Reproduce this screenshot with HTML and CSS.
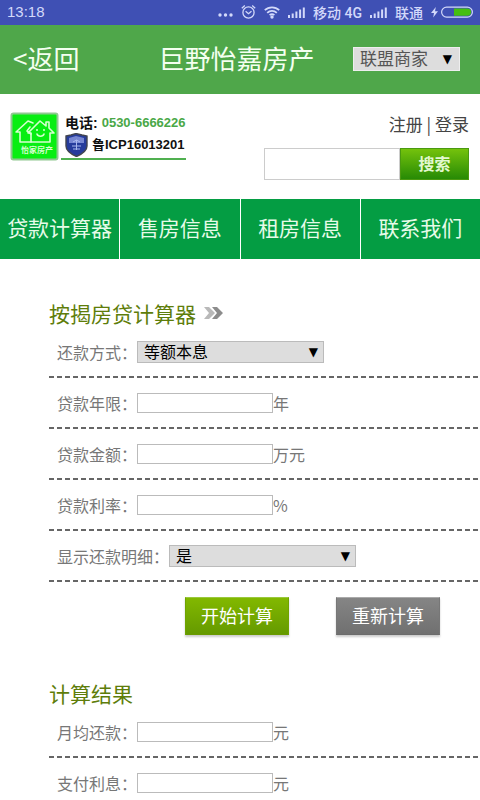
FILE: index.html
```html
<!DOCTYPE html>
<html lang="zh-CN">
<head>
    <meta charset="utf-8">
    <title>按揭房贷计算器</title>
    <meta name="viewport" content="width=device-width, initial-scale=1.0">
    <link rel="stylesheet" href="styles.css">
</head>
<body>
    <div class="status">
        <span class="time">13:18</span>
        <svg width="15" height="16" viewBox="0 0 15 16" fill="currentColor">
            <circle cx="2" cy="11" r="1.7"/><circle cx="7.5" cy="11" r="1.7"/><circle cx="13" cy="11" r="1.7"/>
        </svg>
        <svg width="15" height="16" viewBox="0 0 15 16" fill="none" stroke="currentColor" stroke-width="1.3">
            <circle cx="7.5" cy="8.5" r="5.6"/>
            <path d="M4.6 7.2l2.9 2.5 3-2.5M.8 4.2L3.8 1.6M14.2 4.2l-3-2.6"/>
        </svg>
        <svg width="16" height="16" viewBox="0 0 16 16" fill="none" stroke="currentColor" stroke-width="1.8">
            <path d="M.8 6.2a10.4 10.4 0 0 1 14.4 0M3.2 8.8a7 7 0 0 1 9.6 0M5.6 11.2a3.6 3.6 0 0 1 4.8 0"/>
            <circle cx="8" cy="13" r=".8"/>
        </svg>
        <svg width="17" height="16" viewBox="0 0 17 16" fill="currentColor">
            <path d="M0 11h2v3H0zM3.7 9.5h2V14h-2zM7.4 7.5h2V14h-2zM11.1 5.5h2V14h-2zM14.8 3.5h2V14h-2z"/>
        </svg>
        <span>移动 4G</span>
        <svg width="17" height="16" viewBox="0 0 17 16" fill="currentColor">
            <path d="M0 11h2v3H0zM3.7 9.5h2V14h-2zM7.4 7.5h2V14h-2zM11.1 5.5h2V14h-2zM14.8 3.5h2V14h-2z"/>
        </svg>
        <span>联通</span>
        <svg width="42" height="16" viewBox="0 0 42 16">
            <path d="M4.8 3L0 9h3l-.8 4.5L7 7.2H4z" fill="currentColor"/>
            <rect x="10.6" y="3.1" width="30.8" height="10" rx="5" fill="none" stroke="currentColor" stroke-width="1.2"/>
            <path d="M23 4.4h13.4a3.7 3.7 0 0 1 0 7.4H23z" fill="#45bf10"/>
        </svg>
    </div>

    <header class="header">
        <a class="back" href="#">&lt;返回</a>
        <h1>巨野怡嘉房产</h1>
        <span class="select shop">
            <select aria-label="联盟商家">
                <option>联盟商家</option>
            </select>
        </span>
    </header>

    <div class="top">
        <a class="logo" href="#">
            <svg width="49" height="49" viewBox="0 0 49 49">
                <rect x="1.500" y="1.500" width="46" height="46" rx="2" fill="#08ee12" stroke="#8fc890" stroke-width="2"/>
                <g fill="none" stroke="#d6ffd0" stroke-width="1.6" stroke-linejoin="round" stroke-linecap="round">
                    <path d="M21 30H10V20H6L18 9l5 2"/>
                    <path d="M20 15l-3 4 4 3"/>
                    <path d="M24 30h-3v-9h-3L30 9l6 5v-4h3v6l5 5h-4v9H24"/>
                    <path d="M27 22c1 3 6 3 7 0"/>
                </g>
                <circle cx="27" cy="18" r="1" fill="#d6ffd0"/><circle cx="34" cy="18" r="1" fill="#d6ffd0"/>
                <text x="27" y="41" text-anchor="middle" class="logo-name">怡家房产</text>
            </svg>
            <span class="logo-info">
                <span class="logo-row">电话: <b class="tel">0530-6666226</b></span>
                <span class="logo-row icp">
                    <svg width="23" height="24" viewBox="0 0 23 24">
                        <path d="M1 3l5-1 5-1.500L17 2l5 1v10c0 5-6 8.500-10.500 10.500C7 21.500 1 18 1 13z" fill="#263c9c" stroke="#42454f" stroke-width="1.400"/>
                        <path d="M4 5l7-2 8 2v5H4z" fill="#7787d2"/>
                        <path d="M7 13h9M8 16h7M11.500 7v10M8 9l3.500-2L15 9" fill="none" stroke="#a9b8ee"/>
                    </svg>
                    鲁ICP16013201
                </span>
            </span>
        </a>
        <div class="user">
            <div class="links"><a href="#">注册</a> | <a href="#">登录</a></div>
            <form class="search">
                <input type="text" aria-label="搜索">
                <button type="button">搜索</button>
            </form>
        </div>
    </div>

    <nav class="nav">
        <a href="#">贷款计算器</a>
        <a href="#">售房信息</a>
        <a href="#">租房信息</a>
        <a href="#">联系我们</a>
    </nav>

    <form class="calc">
        <h2>按揭房贷计算器
            <svg width="20" height="14" viewBox="0 0 20 14">
                <path d="M0 1h5l6 6-6 6H0l5-6z" fill="#b9b9b9"/>
                <path d="M8 1h5l6 6-6 6H8l5-6z" fill="#8c8c8c"/>
            </svg>
        </h2>
        <div class="row">
            <label for="way">还款方式：</label>
            <span class="select">
                <select id="way">
                    <option>等额本息</option>
                    <option>等额本金</option>
                </select>
            </span>
        </div>
        <div class="row">
            <label for="years">贷款年限：</label><input type="text" id="years">年
        </div>
        <div class="row">
            <label for="amount">贷款金额：</label><input type="text" id="amount">万元
        </div>
        <div class="row">
            <label for="rate">贷款利率：</label><input type="text" id="rate">%
        </div>
        <div class="row">
            <label for="detail">显示还款明细：</label>
            <span class="select">
                <select id="detail">
                    <option>是</option>
                    <option>否</option>
                </select>
            </span>
        </div>
        <div class="actions">
            <button type="button" class="btn start">开始计算</button>
            <button type="reset" class="btn again">重新计算</button>
        </div>

        <h2>计算结果</h2>
        <div class="row">
            <label for="monthly">月均还款：</label><input type="text" id="monthly">元
        </div>
        <div class="row">
            <label for="interest">支付利息：</label><input type="text" id="interest">元
        </div>
    </form>
</body>
</html>
```
FILE: styles.css
```css
*{
    margin:0;
    padding:0;
    box-sizing:border-box;
}
html{
    scrollbar-width:none;
}
body{
    background-color:#fff;
    font-family:"Noto Sans CJK SC", sans-serif;
    font-size:16px;
    color:#777;
}
a{
    color:inherit;
    text-decoration:none;
}
input, select, button{
    font-family:inherit;
    border-radius:0;
}
svg{
    flex:none;
}

/* phone status bar */
.status{
    display:flex;
    align-items:center;
    gap:8px;
    height:25px;
    padding:0 7px 2px;
    background-color:#3f50b4;
    color:#d3d9fa;
    font-family:Roboto, "Noto Sans CJK SC", sans-serif;
    font-size:14px;
    font-weight:500;
    white-space:nowrap;
}
.time{
    margin-right:auto;
    font-family:"Liberation Sans", sans-serif;
    font-size:15px;
}

.header{
    display:grid;
    grid-template-columns:1fr auto 1fr;
    align-items:center;
    height:69px;
    padding:0 20px 2px 13px;
    background-color:#4fa74a;
    color:#f4fff0;
    font-size:26px;
}
.header h1{
    font-size:26px;
    font-weight:400;
}
.back, .header h1{
    padding-bottom:3px;
}

/* select with its own arrow */
.select{
    position:relative;
    display:inline-flex;
}
.select::after{
    content:"▼";
    position:absolute;
    right:6px;
    top:0;
    bottom:0;
    display:flex;
    align-items:center;
    font-family:"DejaVu Sans", sans-serif;
    font-size:12px;
    color:#000;
    pointer-events:none;
}
.select select{
    appearance:none;
    width:187px;
    height:22px;
    padding:0 6px 2px;
    border:1px solid #bbb;
    background-color:#ddd;
    color:#000;
    font-size:16px;
    line-height:18px;
}
.shop{
    justify-self:end;
}
.shop select{
    width:107px;
    height:24px;
    border:1px solid #eee;
    color:#555;
    font-size:17px;
    line-height:20px;
}
.shop::after{
    right:8px;
}

.top{
    display:flex;
    justify-content:space-between;
    height:105px;
    padding:18px 11px 0 10px;
}
.logo{
    display:flex;
    gap:2px;
    height:49px;
    color:#111;
    font-family:"Liberation Sans", "Noto Sans CJK SC", sans-serif;
    font-weight:700;
}
.logo-name{
    fill:#d6ffd0;
    font-size:8px;
}
.logo-info{
    display:flex;
    flex-direction:column;
    height:48px;
    border-bottom:2px solid #50b050;
}
.logo-row{
    display:flex;
    align-items:center;
    gap:4px;
    height:22px;
    padding-left:4px;
    font-size:14px;
    line-height:22px;
}
.tel{
    color:#4aa847;
    font-size:13px;
}
.icp{
    height:24px;
    padding-bottom:2px;
    font-size:13px;
}
.user{
    display:flex;
    flex-direction:column;
    align-items:flex-end;
    gap:13px;
}
.links{
    color:#444;
    font-size:17px;
    line-height:23px;
}
.search{
    display:flex;
    height:32px;
}
.search input{
    width:136px;
    border:1px solid #ccc;
}
.search button{
    width:69px;
    padding-bottom:2px;
    border:1px solid #4a9a10;
    background-image:linear-gradient(#74c20c, #278a05);
    color:#e2f8d0;
    font-size:16px;
    font-weight:700;
}

.nav{
    display:grid;
    grid-template-columns:repeat(4, 1fr);
    gap:1px;
}
.nav a{
    height:60px;
    background-color:#049d43;
    color:#e6fbe8;
    font-size:21px;
    line-height:56px;
    text-align:center;
    white-space:nowrap;
}

.calc{
    padding:42px 0 0 49px;
}
.calc h2{
    display:flex;
    align-items:center;
    gap:8px;
    height:26px;
    color:#5e7d0a;
    font-size:21px;
    font-weight:400;
    line-height:24px;
    padding-bottom:2px;
}
.row{
    display:flex;
    align-items:center;
    height:51px;
    padding:0 0 2px 8px;
    background:repeating-linear-gradient(90deg, #666 0 5px, transparent 5px 8px) bottom / 100% 2px no-repeat;
}
.row input{
    width:136px;
    height:20px;
    border:1px solid #bbb;
}
.actions{
    display:flex;
    gap:47px;
    height:99px;
    padding:15px 0 0 136px;
}
.btn{
    width:104px;
    height:38px;
    padding-bottom:2px;
    border:1px solid;
    color:#fff;
    font-size:18px;
    box-shadow:0 2px 2px #ccc;
}
.start{
    border-color:#9ac93c #6fa300 #6a9a00;
    background-image:linear-gradient(#82b800, #659a00);
}
.again{
    border-color:#aaa #777 #6c6c6c;
    background-image:linear-gradient(#858585, #707070);
}
```
